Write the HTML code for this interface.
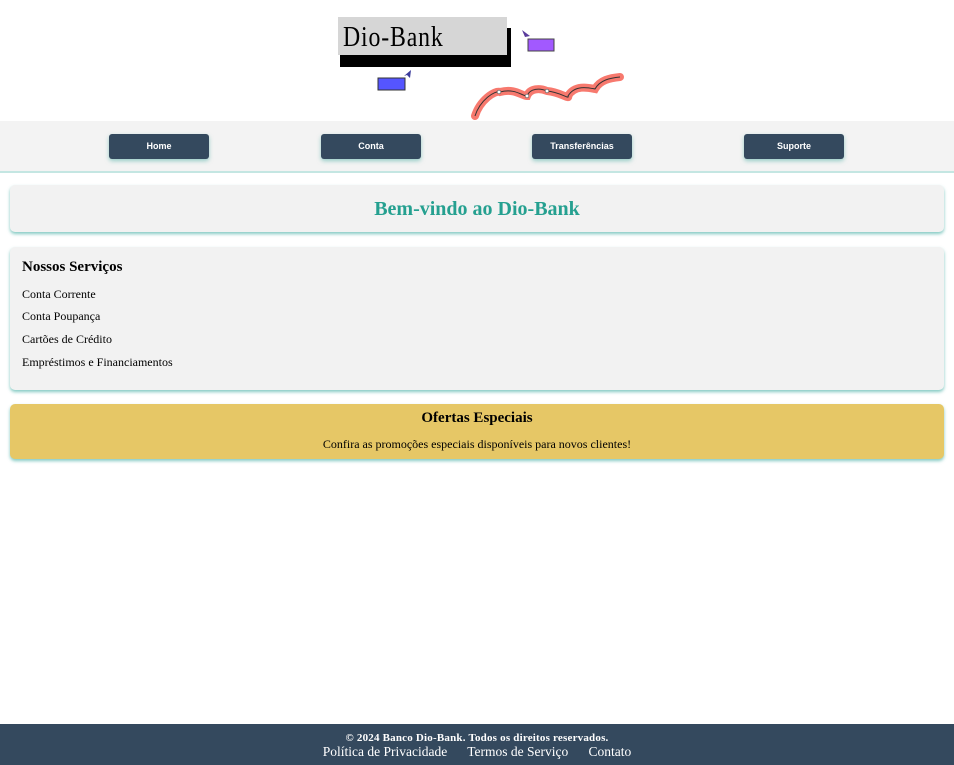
<!DOCTYPE html>
<html><head><meta charset="utf-8"><style>
*{box-sizing:border-box}
body{margin:0;width:954px;height:765px;position:relative;font-family:"Liberation Serif",serif;background:#fff;overflow:hidden}
.logo{position:absolute;left:0;top:0;width:954px;height:121px}
nav{position:absolute;top:121px;left:0;width:954px;height:52px;background:#f3f3f3;border-bottom:2px solid #c4e6e2}
nav a{position:absolute;top:13px;width:100px;height:25px;background:#34495e;color:#fff;font:bold 9px "Liberation Sans",sans-serif;text-align:center;line-height:25px;border-radius:3px;box-shadow:0 2px 4px rgba(90,180,170,.6)}
.card{position:absolute;left:10px;width:934px;background:#f2f2f2;border-radius:5px;box-shadow:0 2px 3px rgba(80,180,170,.7)}
h1{margin:0;font-size:20px;color:#25a090;text-align:center;line-height:48px}
.s h2{font-size:15px;margin:0;position:absolute;left:12px;top:12px}
.s p{margin:0;position:absolute;left:12px;font-size:12px}
footer{position:absolute;left:0;top:724px;width:954px;height:41px;background:#34495e;color:#fff;text-align:center}
</style></head><body>
<svg class="logo" viewBox="0 0 954 121">
<rect x="340" y="28" width="171" height="39" fill="#000"/>
<rect x="338" y="17" width="169" height="38" fill="#d6d6d6"/>
<text x="343" y="46" font-family="Liberation Serif,serif" font-size="28" fill="#000" letter-spacing="1" transform="translate(343 0) scale(0.85 1) translate(-343 0)">Dio-Bank</text>
<rect x="528" y="39" width="26" height="12" fill="#a259ff" stroke="#444" stroke-width="1"/>
<path d="M522 30 L530 36 L525 37 Z" fill="#5a3c9c"/>
<rect x="378" y="78" width="27" height="12" fill="#5555ff" stroke="#333" stroke-width="1"/>
<path d="M411 70 L410 78 L407 75 L404 76 Z" fill="#3c3c9c"/>
<path d="M475 116 C480 100 495 90 500 92 C515 88 522 96 527 96 C530 88 540 88 547 91 C560 92 570 100 568 96 C575 84 590 88 595 89 C600 80 610 78 620 77" fill="none" stroke="#f7796e" stroke-width="8" stroke-linecap="round"/>
<path d="M475 116 C480 100 495 90 500 92 C515 88 522 96 527 96 C530 88 540 88 547 91 C560 92 570 100 568 96 C575 84 590 88 595 89 C600 80 610 78 620 77" fill="none" stroke="#333" stroke-width="1"/>
<circle cx="499" cy="92" r="1.8" fill="#fff" stroke="#555" stroke-width=".6"/>
<circle cx="527" cy="96" r="1.8" fill="#fff" stroke="#555" stroke-width=".6"/>
<circle cx="547" cy="91" r="1.8" fill="#fff" stroke="#555" stroke-width=".6"/>
</svg>
<nav><a style="left:109px">Home</a><a style="left:321px">Conta</a><a style="left:532px">Transferências</a><a style="left:744px">Suporte</a></nav>
<div class="card" style="top:185px;height:47px"><h1>Bem-vindo ao Dio-Bank</h1></div>
<div class="card s" style="top:247px;height:143px">
<h2>Nossos Serviços</h2>
<p style="top:40px">Conta Corrente</p><p style="top:62px">Conta Poupança</p><p style="top:85px">Cartões de Crédito</p><p style="top:108px">Empréstimos e Financiamentos</p>
</div>
<div class="card" style="top:404px;height:55px;background:#e6c766;text-align:center">
<div style="font-weight:bold;font-size:15px;margin-top:6px">Ofertas Especiais</div>
<div style="font-size:12px;margin-top:10px">Confira as promoções especiais disponíveis para novos clientes!</div>
</div>
<footer><div style="font-size:11px;font-weight:bold;padding-top:8px;line-height:12px;letter-spacing:.2px">© 2024 Banco Dio-Bank. Todos os direitos reservados.</div>
<div style="font-size:13.5px;line-height:15px">Política de Privacidade &nbsp;&nbsp;&nbsp;&nbsp; Termos de Serviço &nbsp;&nbsp;&nbsp;&nbsp; Contato</div></footer>
</body></html>
